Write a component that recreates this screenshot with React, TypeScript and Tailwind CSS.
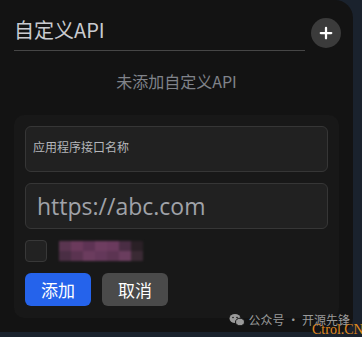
import { Plus } from 'lucide-react';

const font = { fontFamily: '"Noto Sans CJK SC", "Noto Sans", sans-serif' };

const blurCells = [
  ['#5a3550', '#6b3a5c', '#5e3354', '#6e3d60', '#6a3a5d', '#4a2d44', '#2a2026'],
  ['#4a2e44', '#5a3350', '#6b3c5e', '#64385a', '#5c3452', '#6a3d5e', '#3a2a34'],
];

export default function App() {
  return (
    <div className="w-[362px] h-[337px] bg-[#1a222d] overflow-hidden relative" style={font}>
      <div className="w-[353px] h-[332px] bg-[#131313] rounded-br-[14px] rounded-tr-[18px] relative">
        <div className="flex items-center pl-[14px] pr-[12px] pt-[16px]">
          <div className="flex-1 border-b border-[#464646] pb-[6px]">
            <span className="text-[20px] leading-[28px] text-[#c9cbd0]">自定义API</span>
          </div>
          <button className="ml-[6px] -mt-[2px] w-[30px] h-[30px] rounded-full bg-[#3b3b3b] flex items-center justify-center">
            <Plus size={18} strokeWidth={3} color="#ffffff" />
          </button>
        </div>

        <div className="text-center text-[16px] leading-[24px] text-[#80838a] mt-[18px]">未添加自定义API</div>

        <div className="mx-[14px] mt-[22px] bg-[#181818] rounded-[10px] px-[11px] pt-[11px] pb-[12px]">
          <div className="h-[46px] bg-[#212121] border border-[#363636] rounded-[6px] px-[7px] pt-[6px]">
            <span className="text-[12px] leading-[18px] text-[#b5b7bb]">应用程序接口名称</span>
          </div>
          <div className="mt-[11px] h-[46px] bg-[#212121] border border-[#363636] rounded-[6px] px-[11px] flex items-center">
            <span className="text-[23px] text-[#a0a3a9]" style={{ fontFamily: '"Open Sans", sans-serif' }}>https://abc.com</span>
          </div>
          <div className="mt-[11px] flex items-center gap-[12px]">
            <div className="w-[22px] h-[22px] rounded-[4px] bg-[#222222] border border-[#383838]" />
            <div className="flex flex-col blur-[1px]">
              {blurCells.map((row, i) => (
                <div key={i} className="flex">
                  {row.map((c, j) => (
                    <div key={j} className="w-[12px] h-[10px]" style={{ background: c }} />
                  ))}
                </div>
              ))}
            </div>
          </div>
          <div className="mt-[11px] flex gap-[11px]">
            <button className="w-[66px] h-[33px] rounded-[6px] bg-[#2563eb] text-white text-[17px]">添加</button>
            <button className="w-[66px] h-[33px] rounded-[6px] bg-[#4a4a4a] text-white text-[17px]">取消</button>
          </div>
        </div>

        <div className="absolute right-[3px] bottom-[3px] flex items-center gap-[4px] text-[12px] text-[#9a9a9a]">
          <svg width="16" height="14" viewBox="0 0 16 14">
            <ellipse cx="6" cy="5.5" rx="5.5" ry="4.5" fill="#9a9a9a" />
            <ellipse cx="11" cy="9" rx="4.5" ry="3.8" fill="#9a9a9a" stroke="#131313" strokeWidth="1" />
            <circle cx="4" cy="4.5" r="0.8" fill="#131313" />
            <circle cx="8" cy="4.5" r="0.8" fill="#131313" />
          </svg>
          <span>公众号 · 开源先锋</span>
        </div>
      </div>
      <div className="absolute left-[312px] top-[323px] text-[14px] leading-[14px] text-[#e08a1e]" style={{ fontFamily: '"Liberation Serif", serif' }}>Ctrol.CN</div>
    </div>
  );
}
